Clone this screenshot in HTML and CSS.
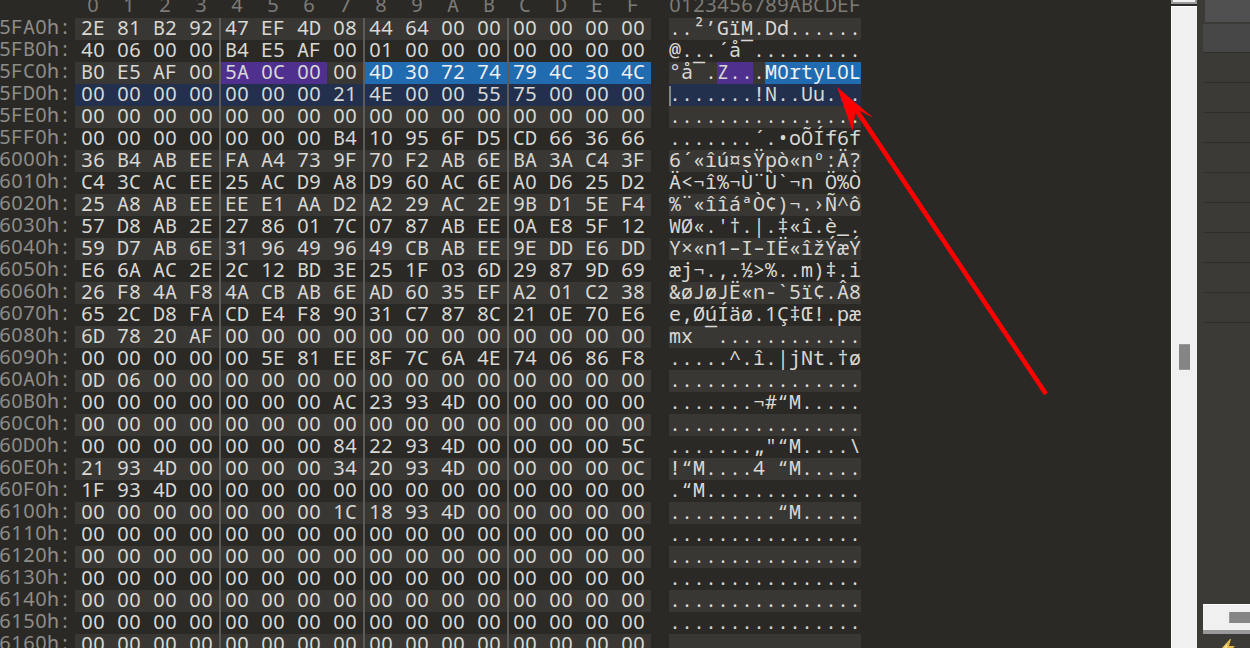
FILE: index.html
```html
<!DOCTYPE html>
<html lang="en">
<head>
  <meta charset="UTF-8" />
  <meta name="viewport" content="width=device-width, initial-scale=1.0"/>
  <title>Hex View</title>
  <link rel="stylesheet" href="styles.css">
</head>
<body>

  <div class="window">
    <main class="editor">
      <div class="row head" id="head"></div>
      <div id="rows"></div>
    </main>

    <div class="scrollbar">
      <div class="scroll-up"></div>
      <div class="track">
        <div class="thumb"></div>
      </div>
    </div>

    <aside class="side">
      <div class="tab"></div>
      <div class="list">
        <div class="item selected"></div>
        <div class="item"></div>
        <div class="item"></div>
        <div class="item"></div>
        <div class="item"></div>
        <div class="item"></div>
        <div class="item"></div>
        <div class="item"></div>
        <div class="item"></div>
        <div class="item"></div>
      </div>
      <div class="hscroll">
        <div class="hthumb"></div>
      </div>
      <svg class="bolt" width="16" height="20" viewBox="0 0 16 20">
        <path d="M10 0L1 10H6L3 19L15 7H9L11 0Z" fill="#e0b84c"/>
        <path d="M7 5L4 8.5H7Z" fill="#f7e9b0"/>
      </svg>
    </aside>
  </div>

  <!-- Arrow over the selected string -->
  <svg class="arrow" width="1250" height="648" viewBox="0 0 1250 648">
    <path d="M1046 394L855 108" stroke="#fe0000" stroke-width="4.6"/>
    <path d="M837 87L873.5 118L856 109L852.5 131Z" fill="#fe0000"/>
  </svg>

  <script src="script.js"></script>
</body>
</html>
```

FILE: styles.css
```css
body {
  margin: 0;
  height: 648px;
  overflow: hidden;
  background: #2b2925;
  color: #d8d8d4;
  font-family: "Noto Sans Mono", "Noto Sans", sans-serif;
  font-size: 20px;
}

.window {
  display: flex;
  height: 648px;
  overflow: hidden;
}

.editor {
  flex: 1;
  overflow: hidden;
}

/* Rows */
.row {
  display: flex;
  height: 22px;
  line-height: 20px;
}

.head {
  height: 18px;
  line-height: 10px;
  color: #7c7b78;
}

.addr {
  display: flex;
  width: 76px;
  margin-left: -1px;
  line-height: 18px;
  color: #8e8d89;
}

.hex {
  display: flex;
  width: 576px;
  margin-right: 18px;
}

.text {
  display: flex;
  width: 192px;
}

.byte {
  display: flex;
  justify-content: center;
  box-sizing: border-box;
  width: 36px;
}

.ch {
  display: flex;
  justify-content: center;
  flex: none;
  width: 12px;
  white-space: pre;
}

/* plain digits, no slashed zero */
.digit {
  font-family: "Noto Sans", sans-serif;
}

.macron {
  font-family: "Open Sans", sans-serif;
  font-size: 24px;
}

.alt .hex,
.alt .text {
  background: #393733;
}

.current .hex,
.current .text {
  background: #22304e;
}

.current .text {
  background: linear-gradient(#85868a, #85868a) 0 2px / 2px 20px no-repeat #22304e;
}

.mark {
  background: #50308f;
}

.select {
  background: #216bb0;
  color: #f0f0f0;
}

.rule {
  box-shadow: inset 2px 0 #5c5b5a;
}

/* Scrollbar */
.scrollbar {
  display: flex;
  flex-direction: column;
  width: 26px;
}

.scroll-up {
  height: 2px;
  margin-bottom: 2px;
  border: 2px solid #999;
  border-top: 0;
  background: #f0f0f0;
}

.track {
  flex: 1;
  box-sizing: border-box;
  padding: 337px 7px 0;
  border-top: 1px solid #fff;
  border-left: 1px solid #fff;
  background: #f0f0f0;
}

.thumb {
  box-sizing: border-box;
  width: 11px;
  height: 26px;
  border: solid #999;
  border-width: 1px 0;
  background: #858585;
}

/* Side panel */
.side {
  display: flex;
  flex-direction: column;
  box-sizing: border-box;
  width: 53px;
  padding-left: 6px;
  overflow: hidden;
  background: #3c3a36;
}

.tab {
  flex: none;
  height: 22px;
  margin: 0 0 2px 2px;
  background: #505050;
}

.list {
  flex: none;
  height: 580px;
}

.item {
  height: 29px;
  border-bottom: 1px solid #2d2d2d;
}

.selected {
  height: 28px;
  background: #474747;
}

.hscroll {
  flex: none;
  box-sizing: border-box;
  height: 30px;
  padding: 7px 0 0 26px;
  border-top: 1px solid #fff;
  border-bottom: 4px solid #999;
  background: #f0f0f0;
}

.hthumb {
  height: 11px;
  border-left: 1px solid #999;
  background: #858585;
}

.bolt {
  flex: none;
  margin: 5px 0 0 17px;
}

.arrow {
  position: absolute;
  top: 0;
  left: 0;
}
```

FILE: script.js
```js
const lines = [
  ["5FA0h:", "2E 81 B2 92 47 EF 4D 08 44 64"],
  ["5FB0h:", "40 06 00 00 B4 E5 AF 00 01"],
  ["5FC0h:", "B0 E5 AF 00 5A 0C 00 00 4D 30 72 74 79 4C 30 4C"],
  ["5FD0h:", "00 00 00 00 00 00 00 21 4E 00 00 55 75"],
  ["5FE0h:", ""],
  ["5FF0h:", "00 00 00 00 00 00 00 B4 10 95 6F D5 CD 66 36 66"],
  ["6000h:", "36 B4 AB EE FA A4 73 9F 70 F2 AB 6E BA 3A C4 3F"],
  ["6010h:", "C4 3C AC EE 25 AC D9 A8 D9 60 AC 6E A0 D6 25 D2"],
  ["6020h:", "25 A8 AB EE EE E1 AA D2 A2 29 AC 2E 9B D1 5E F4"],
  ["6030h:", "57 D8 AB 2E 27 86 01 7C 07 87 AB EE 0A E8 5F 12"],
  ["6040h:", "59 D7 AB 6E 31 96 49 96 49 CB AB EE 9E DD E6 DD"],
  ["6050h:", "E6 6A AC 2E 2C 12 BD 3E 25 1F 03 6D 29 87 9D 69"],
  ["6060h:", "26 F8 4A F8 4A CB AB 6E AD 60 35 EF A2 01 C2 38"],
  ["6070h:", "65 2C D8 FA CD E4 F8 90 31 C7 87 8C 21 0E 70 E6"],
  ["6080h:", "6D 78 20 AF"],
  ["6090h:", "00 00 00 00 00 5E 81 EE 8F 7C 6A 4E 74 06 86 F8"],
  ["60A0h:", "0D 06"],
  ["60B0h:", "00 00 00 00 00 00 00 AC 23 93 4D"],
  ["60C0h:", ""],
  ["60D0h:", "00 00 00 00 00 00 00 84 22 93 4D 00 00 00 00 5C"],
  ["60E0h:", "21 93 4D 00 00 00 00 34 20 93 4D 00 00 00 00 0C"],
  ["60F0h:", "1F 93 4D"],
  ["6100h:", "00 00 00 00 00 00 00 1C 18 93 4D"],
  ["6110h:", ""],
  ["6120h:", ""],
  ["6130h:", ""],
  ["6140h:", ""],
  ["6150h:", ""],
  ["6160h:", ""]
];

const decoder = new TextDecoder("windows-1252");

function toChar(hex) {
  const code = parseInt(hex, 16);
  if (code === 0xad) return "-";
  const c = decoder.decode(new Uint8Array([code]));
  return /[\u0000-\u001f\u007f-\u009f]/.test(c) ? "." : c;
}

function box(className) {
  const el = document.createElement("div");
  el.className = className;
  return el;
}

function cell(c) {
  const el = box("ch");
  if (/[0-9]/.test(c)) el.classList.add("digit");
  if (c === "¯") el.classList.add("macron");
  el.textContent = c;
  return el;
}

function highlight(row, i) {
  if (row !== 2) return "";
  if (i >= 4 && i <= 6) return " mark";
  return i >= 8 ? " select" : "";
}

const head = document.getElementById("head");
const headHex = box("hex");
const headText = box("text");
head.append(box("addr"), headHex, headText);
for (const c of "0123456789ABCDEF") {
  const b = box("byte");
  b.append(cell(c));
  headHex.append(b);
  headText.append(cell(c));
}

lines.forEach(([address, data], n) => {
  const bytes = data ? data.split(" ") : [];
  while (bytes.length < 16) bytes.push("00");

  const row = box("row" + (n === 3 ? " current" : n % 2 ? "" : " alt"));
  const addr = box("addr");
  const hex = box("hex");
  const text = box("text");
  for (const c of address) addr.append(cell(c));

  bytes.forEach((value, i) => {
    const b = box("byte" + highlight(n, i) + (i && i % 4 === 0 ? " rule" : ""));
    b.append(cell(value[0]), cell(value[1]));
    hex.append(b);

    const t = cell(toChar(value));
    t.className += highlight(n, i);
    text.append(t);
  });

  row.append(addr, hex, text);
  document.getElementById("rows").append(row);
});
```
